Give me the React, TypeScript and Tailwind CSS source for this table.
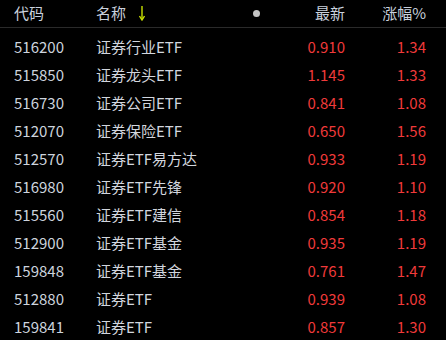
import React from "react";

const rows = [
  { code: "516200", name: "证券行业ETF", price: "0.910", pct: "1.34" },
  { code: "515850", name: "证券龙头ETF", price: "1.145", pct: "1.33" },
  { code: "516730", name: "证券公司ETF", price: "0.841", pct: "1.08" },
  { code: "512070", name: "证券保险ETF", price: "0.650", pct: "1.56" },
  { code: "512570", name: "证券ETF易方达", price: "0.933", pct: "1.19" },
  { code: "516980", name: "证券ETF先锋", price: "0.920", pct: "1.10" },
  { code: "515560", name: "证券ETF建信", price: "0.854", pct: "1.18" },
  { code: "512900", name: "证券ETF基金", price: "0.935", pct: "1.19" },
  { code: "159848", name: "证券ETF基金", price: "0.761", pct: "1.47" },
  { code: "512880", name: "证券ETF", price: "0.939", pct: "1.08" },
  { code: "159841", name: "证券ETF", price: "0.857", pct: "1.30" },
];

export default function App() {
  return (
    <div
      className="w-[446px] h-[340px] overflow-hidden bg-black text-[15px]"
      style={{ fontFamily: '"Microsoft YaHei", "Noto Sans CJK SC", sans-serif' }}
    >
      {/* header */}
      <div className="flex items-center h-[27px] text-[#c9d1dd] border-b border-[#2a2a2a] box-content">
        <div className="w-[96px] pl-[14px]">代码</div>
        <div className="w-[140px] flex items-center">
          名称
          <svg className="ml-[13px]" width="6" height="15" viewBox="0 0 6 15">
            <path d="M3 0 V13" stroke="#c8e000" strokeWidth="1.4" />
            <path d="M0.5 10 L3 14 L5.5 10" stroke="#c8e000" strokeWidth="1.4" fill="none" />
          </svg>
        </div>
        <div className="w-[40px] flex justify-center">
          <span className="w-[7px] h-[7px] rounded-full bg-[#c4c4c4]" />
        </div>
        <div className="w-[69px] text-right">最新</div>
        <div className="w-[81px] text-right">涨幅%</div>
      </div>
      {/* rows */}
      <div className="pt-[5px]">
        {rows.map((r) => (
          <div key={r.code + r.name} className="flex items-center h-[28px]">
            <div className="w-[96px] pl-[14px] text-[#cdd4de]">{r.code}</div>
            <div className="w-[180px] text-[#d2d6de]">{r.name}</div>
            <div className="w-[69px] text-right text-[#f03a3a]">{r.price}</div>
            <div className="w-[81px] text-right text-[#f03a3a]">{r.pct}</div>
          </div>
        ))}
      </div>
    </div>
  );
}
